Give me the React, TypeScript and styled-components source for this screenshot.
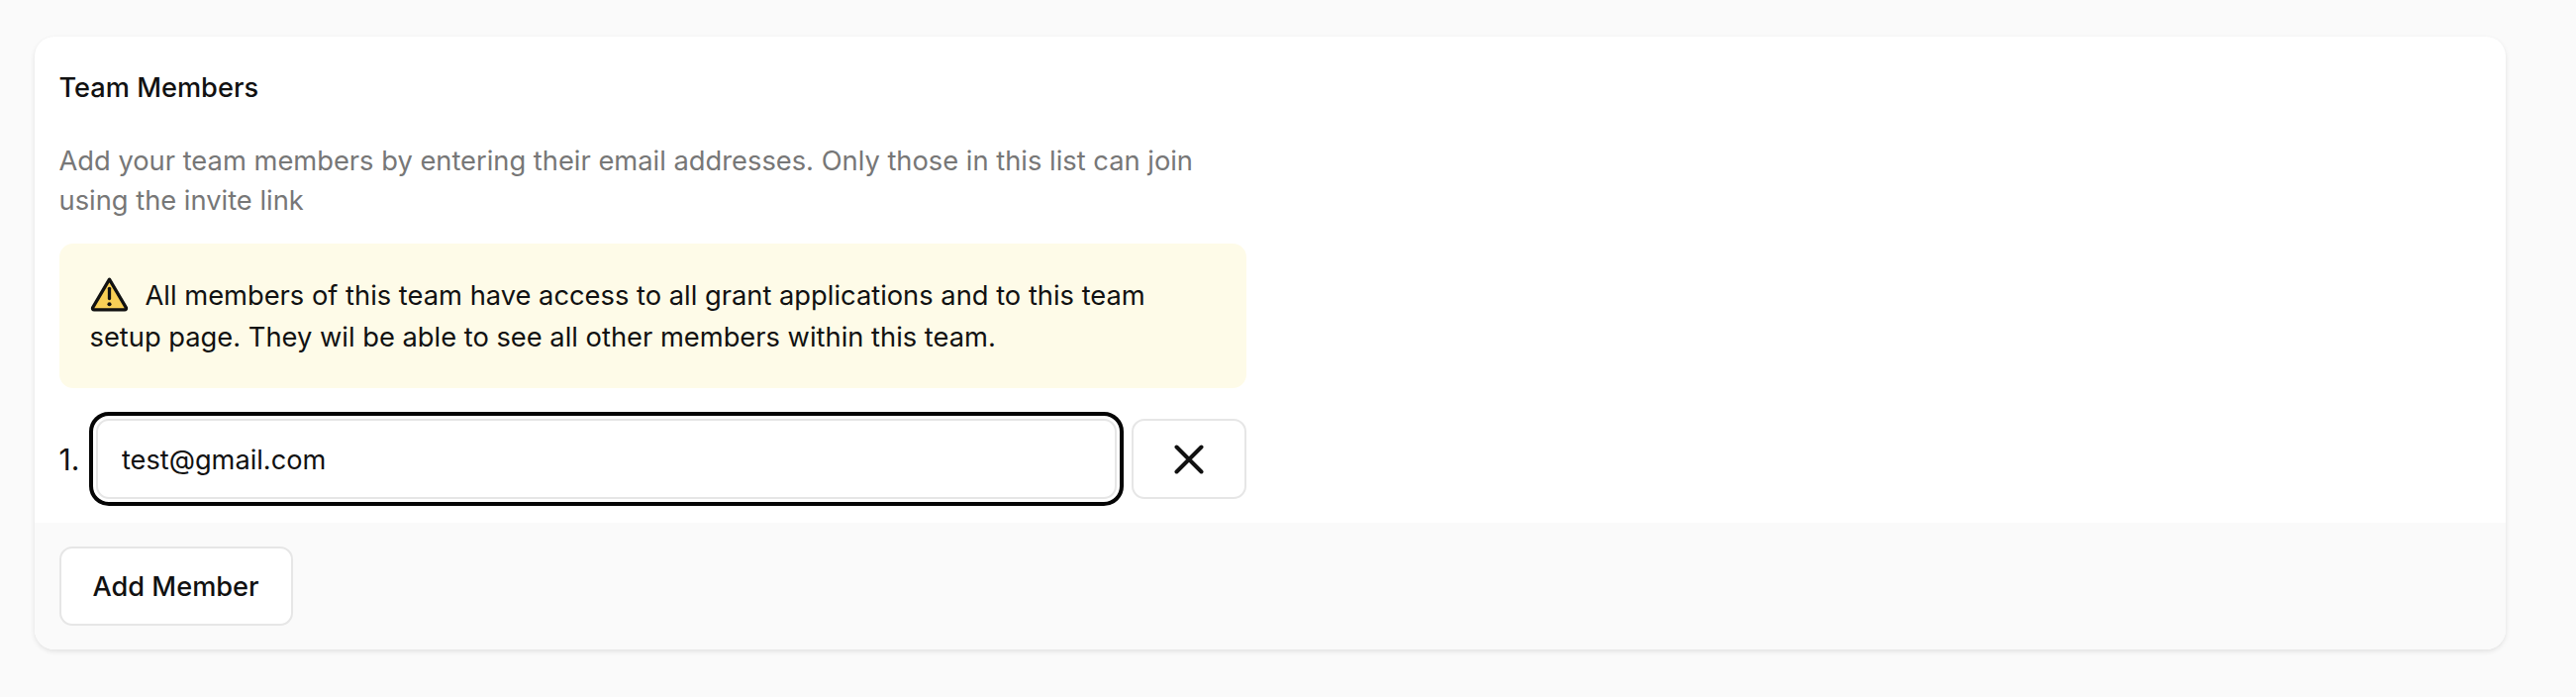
import React from "react";
import styled, { createGlobalStyle } from "styled-components";

const GlobalStyle = createGlobalStyle`
  html, body {
    margin: 0;
    padding: 0;
    background: #fafafa;
    font-family: Inter, "Noto Sans", sans-serif;
    color: #111;
  }
  * {
    box-sizing: border-box;
  }
`;

// STYLES
const Page = styled.main`
  height: 704px;
  padding: 37px 70px 0 35px;
`;

const Card = styled.section`
  width: 2496px;
  height: 619px;
  background: #fff;
  border-radius: 20px;
  box-shadow: 0 2px 5px rgba(0, 0, 0, 0.1);
  overflow: hidden;
  display: flex;
  flex-direction: column;
`;

const Body = styled.div`
  flex: 1;
  padding: 33px 24.5px 0;
`;

const Column = styled.div`
  width: 1199px;
`;

const Title = styled.h2`
  margin: 0;
  font-size: 27.2px;
  line-height: 38px;
  font-weight: 450;
`;

const Description = styled.p`
  margin: 35px 0 0;
  width: 1180px;
  font-size: 27.3px;
  line-height: 40px;
  color: #777;
`;

const Alert = styled.div`
  margin-top: 23px;
  height: 146px;
  padding: 32px 31px 0;
  background: #fefbe8;
  border-radius: 14px;
  font-size: 27.3px;
  line-height: 42px;
`;

const AlertIcon = styled.svg`
  width: 39px;
  height: 37px;
  margin-right: 17px;
  vertical-align: -8px;
`;

const MemberRow = styled.div`
  margin-top: 31px;
  display: flex;
  align-items: center;
`;

const MemberIndex = styled.span`
  width: 37.5px;
  font-size: 30px;
`;

const EmailInput = styled.input`
  width: 1032px;
  height: 81px;
  padding: 2px 24px 0;
  border: 2px solid #e6e6e6;
  border-radius: 13px;
  outline: 4px solid #050505;
  outline-offset: 3px;
  background: #fff;
  color: #111;
  font-family: inherit;
  font-size: 27.2px;
`;

const IconButton = styled.button`
  width: 116px;
  height: 81px;
  margin-left: 15px;
  padding: 0;
  border: 2px solid #e6e6e6;
  border-radius: 13px;
  background: #fff;
  display: flex;
  align-items: center;
  justify-content: center;
`;

const Footer = styled.footer`
  height: 128px;
  padding: 24px 24.5px;
  background: #fafafa;
`;

const AddButton = styled.button`
  width: 236px;
  height: 80px;
  padding: 0;
  border: 2px solid #e6e6e6;
  border-radius: 13px;
  background: #fff;
  color: #111;
  font-family: inherit;
  font-size: 27.2px;
  font-weight: 450;
`;

const App: React.FC = () => {
  return (
    <Page>
      <GlobalStyle />
      <Card>
        <Body>
          <Column>
            <Title>Team Members</Title>
            <Description>
              Add your team members by entering their email addresses. Only
              those in this list can join using the invite link
            </Description>
            <Alert>
              <AlertIcon viewBox="0 0 38 36" aria-hidden="true">
                <path
                  d="M19 3 L35.5 31 Q36 33 34 33 L4 33 Q2 33 2.5 31 Z"
                  fill="#f8cf56"
                  stroke="#111"
                  strokeWidth="3.2"
                  strokeLinejoin="round"
                />
                <path
                  d="M19 12 V22"
                  stroke="#111"
                  strokeWidth="3.2"
                  strokeLinecap="round"
                />
                <circle cx="19" cy="27.5" r="2" fill="#111" />
              </AlertIcon>
              All members of this team have access to all grant applications and
              to this team setup page. They wil be able to see all other members
              within this team.
            </Alert>
            <MemberRow>
              <MemberIndex>1.</MemberIndex>
              <EmailInput type="email" value="test@gmail.com" readOnly />
              <IconButton aria-label="Remove member">
                <svg width="30" height="30" viewBox="0 0 30 30" aria-hidden="true">
                  <path
                    d="M2.5 2.5 L27.5 27.5 M27.5 2.5 L2.5 27.5"
                    stroke="#111"
                    strokeWidth="4"
                    strokeLinecap="round"
                  />
                </svg>
              </IconButton>
            </MemberRow>
          </Column>
        </Body>
        <Footer>
          <AddButton>Add Member</AddButton>
        </Footer>
      </Card>
    </Page>
  );
};

export default App;
